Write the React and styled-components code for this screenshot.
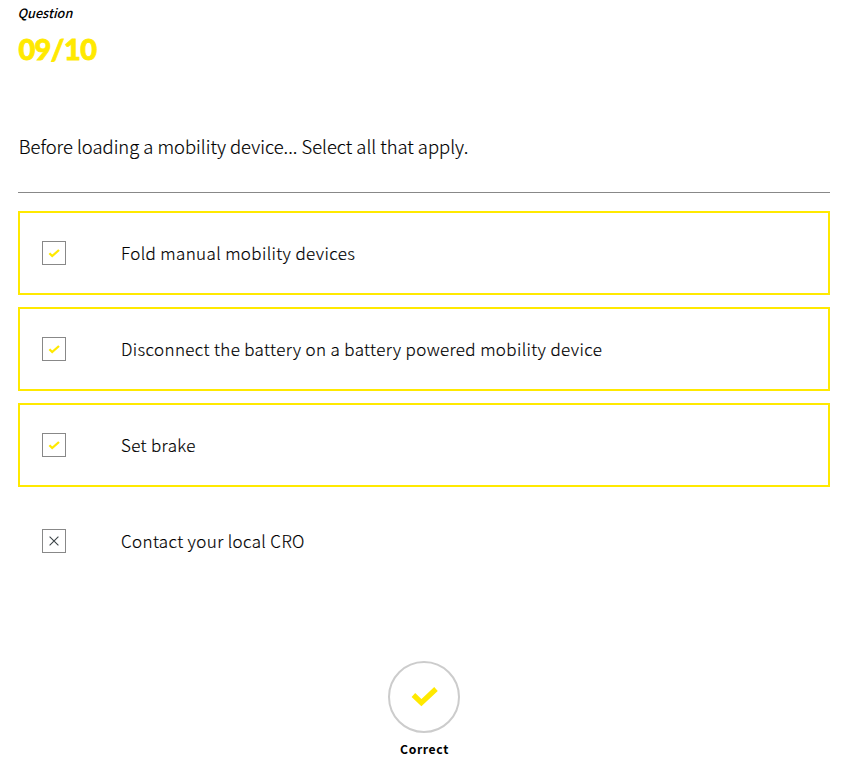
import React from "react";
import styled, { createGlobalStyle } from "styled-components";

const Global = createGlobalStyle`
  * { box-sizing: border-box; }
  body { margin: 0; background: #fff; color: #000; font-family: "Noto Sans CJK SC", "Open Sans", sans-serif; }
`;
const Page = styled.main`
  width: 846px; height: 766px; padding: 3px 16px 0 18px; overflow: hidden;
  display: flex; flex-direction: column;
`;
const Label = styled.div`
  height: 20px; line-height: 20px; font-size: 12.7px; font-style: italic; font-weight: 500; white-space: nowrap;
  text-indent: -0.5px;
`;
const Counter = styled.div`
  height: 40px; margin-top: 6px; line-height: 40px; font-family: Lato, sans-serif; font-size: 29px; font-weight: 900;
  letter-spacing: -0.6px; text-indent: 0.4px; color: #ffe900; white-space: nowrap;
  -webkit-text-stroke: 0.8px #ffe900;
`;
const Prompt = styled.h1`
  margin: 63px 0 0; height: 61px; line-height: 28px; font-size: 18.4px; font-weight: 300; text-indent: 0.7px;
  border-bottom: 1px solid #888; white-space: nowrap;
  -webkit-text-stroke: 0.15px #000;
`;
const Answers = styled.div`
  display: grid; gap: 12px; margin-top: 18px;
`;
const Answer = styled.div`
  height: 84px; display: flex; align-items: center; gap: 55px; padding-left: 22px;
  border: 2px solid ${(p) => (p.$chosen ? "#ffe900" : "transparent")};
`;
const Box = styled.span`
  width: 24px; height: 24px; border: 1px solid #888; display: flex;
`;
const AnswerText = styled.span`
  font-size: 17px; line-height: 28px; font-weight: 300; letter-spacing: 0.36px; white-space: nowrap;
  -webkit-text-stroke: 0.15px #000;
`;
const Result = styled.div`
  display: flex; flex-direction: column; align-items: center; margin-top: 78px;
`;
const Circle = styled.div`
  width: 72px; height: 72px; border: 2px solid #ccc; border-radius: 50%; display: flex;
`;
const ResultText = styled.div`
  margin-top: 6px; line-height: 20px; padding-left: 1px; font-size: 12.2px; font-weight: 700; letter-spacing: 0.6px; white-space: nowrap;
`;

const answers = [
  ["Fold manual mobility devices", true],
  ["Disconnect the battery on a battery powered mobility device", true],
  ["Set brake", true],
  ["Contact your local CRO", false],
];

export default function App() {
  return (
    <Page>
      <Global />
      <Label>Question</Label>
      <Counter>09/10</Counter>
      <Prompt>Before loading a mobility device... Select all that apply.</Prompt>
      <Answers>
        {answers.map(([text, chosen]) => (
          <Answer key={text} $chosen={chosen}>
            <Box>
              <svg width="22" height="22" fill="none">
                {chosen
                  ? <path d="M6.4 11.2l2.8 2.8 6.8-6" stroke="#ffe900" strokeWidth="2.3" />
                  : <path d="M6.6 6.6l8.8 8.8m0-8.8l-8.8 8.8" stroke="#3c4448" strokeWidth="1.1" />}
              </svg>
            </Box>
            <AnswerText>{text}</AnswerText>
          </Answer>
        ))}
      </Answers>
      <Result>
        <Circle>
          <svg width="68" height="68" fill="none">
            <path d="M23.4 32l8 7.6 14.6-13.6" stroke="#ffe900" strokeWidth="5.2" />
          </svg>
        </Circle>
        <ResultText>Correct</ResultText>
      </Result>
    </Page>
  );
}
